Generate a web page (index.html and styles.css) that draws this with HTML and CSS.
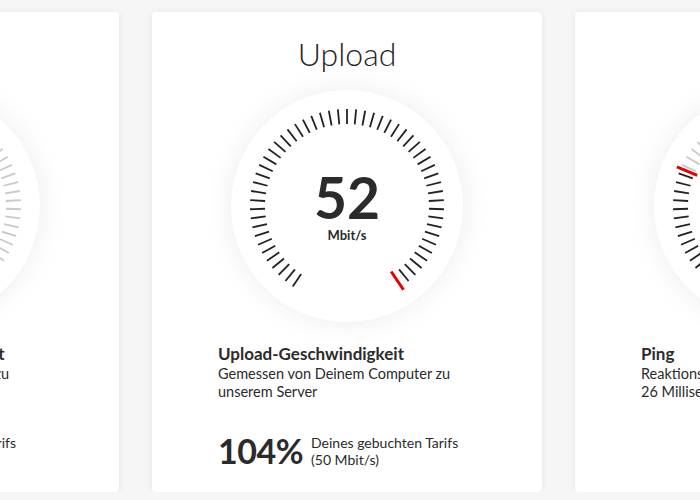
FILE: index.html
```html
<!DOCTYPE html>
<html lang="de">
<head>
	<meta charset="utf-8">
	<title>Speedtest - Ergebnis</title>
	<link rel="stylesheet" href="styles.css">
</head>
<body>
<div class="results">

	<div class="card">
		<h2 class="title">Download</h2>
		<div class="gauge">
			<svg class="ticks" viewBox="-116 -116 232 232" data-value="0.6"></svg>
			<div class="reading"><span class="num">240</span><span class="unit">Mbit/s</span></div>
		</div>
		<div class="info">
			<h3>Download-Geschwindigkeit</h3>
			<p>Gemessen von unserem Server zu Deinem Computer</p>
			<div class="rate"><span class="pct">96%</span><span class="rate-text">Deines gebuchten Tarifs<br>(250 Mbit/s)</span></div>
		</div>
	</div>

	<div class="card">
		<h2 class="title">Upload</h2>
		<div class="gauge">
			<svg class="ticks" viewBox="-116 -116 232 232" data-value="1"></svg>
			<div class="reading"><span class="num">52</span><span class="unit">Mbit/s</span></div>
		</div>
		<div class="info">
			<h3>Upload-Geschwindigkeit</h3>
			<p>Gemessen von Deinem Computer zu unserem Server</p>
			<div class="rate"><span class="pct">104%</span><span class="rate-text">Deines gebuchten Tarifs<br>(50 Mbit/s)</span></div>
		</div>
	</div>

	<div class="card">
		<h2 class="title">Ping</h2>
		<div class="gauge">
			<svg class="ticks" viewBox="-116 -116 232 232" data-value="0.27"></svg>
			<div class="reading"><span class="num">26</span><span class="unit">ms</span></div>
		</div>
		<div class="info">
			<h3>Ping</h3>
			<p>Reaktionszeit des Servers:<br>26 Millisekunden</p>
		</div>
	</div>

</div>
<script src="gauge.js"></script>
</body>
</html>
```

FILE: styles.css
```css
html, body {margin: 0; padding: 0;}
body {background: #f6f6f6; font-family: Lato, "Open Sans", sans-serif; color: #2b2b2b; overflow: hidden;}

.results {display: flex; justify-content: center; gap: 33px; padding: 12px 6px 0 0; width: 700px; box-sizing: border-box;}

.card {flex: 0 0 390px; height: 480px; box-sizing: border-box; padding-top: 22px; background: #fff; border-radius: 4px; box-shadow: 0 0 7px rgba(0,0,0,0.07); display: flex; flex-direction: column; align-items: center;}

.title {margin: 0; font-size: 32px; line-height: 40px; font-weight: 300; color: #222;}

.gauge {margin-top: 16px; width: 232px; height: 232px; border-radius: 50%; background: #fff; box-shadow: 0 0 28px rgba(0,0,0,0.08); display: grid;}
.gauge > * {grid-area: 1 / 1;}
.ticks {width: 232px; height: 232px;}
.reading {display: flex; flex-direction: column; align-items: center; justify-content: center; padding-top: 2px;}
.num {font-size: 57px; line-height: 52px; font-weight: 700; color: #2b2b2b;}
.unit {font-size: 13px; line-height: 16px; font-weight: 700; margin-top: 4px;}

.info {width: 258px; margin-top: 22px;}
.info h3 {margin: 0; font-size: 17px; line-height: 20px; font-weight: 700;}
.info p {margin: 1px 0 0; font-size: 14.5px; line-height: 18px;}

.rate {display: flex; gap: 8px; margin-top: 33px;}
.pct {font-size: 34px; line-height: 34px; font-weight: 700; letter-spacing: -0.5px;}
.rate-text {font-size: 14px; line-height: 17px;}
```

FILE: gauge.js
```js
// draws the tick marks of each speed gauge, value is a fraction of the scale
var NS = 'http://www.w3.org/2000/svg';
var COUNT = 55, FROM = -146, TO = 146;

function tick(svg, angle, r1, r2, color, width) {
	var l = document.createElementNS(NS, 'line');
	l.setAttribute('x1', 0);
	l.setAttribute('y1', -r1);
	l.setAttribute('x2', 0);
	l.setAttribute('y2', -r2);
	l.setAttribute('stroke', color);
	l.setAttribute('stroke-width', width);
	l.setAttribute('transform', 'rotate(' + angle + ')');
	svg.appendChild(l);
}

document.querySelectorAll('svg.ticks').forEach(function (svg) {
	var mark = FROM + (TO - FROM) * parseFloat(svg.dataset.value);
	for (var i = 0; i < COUNT; i++) {
		var a = FROM + i * (TO - FROM) / (COUNT - 1);
		tick(svg, a, 82, 97, a <= mark ? '#222' : '#c9c9c9', 1.8);
	}
	tick(svg, mark, 79, 101, '#e60000', 3);
});
```
